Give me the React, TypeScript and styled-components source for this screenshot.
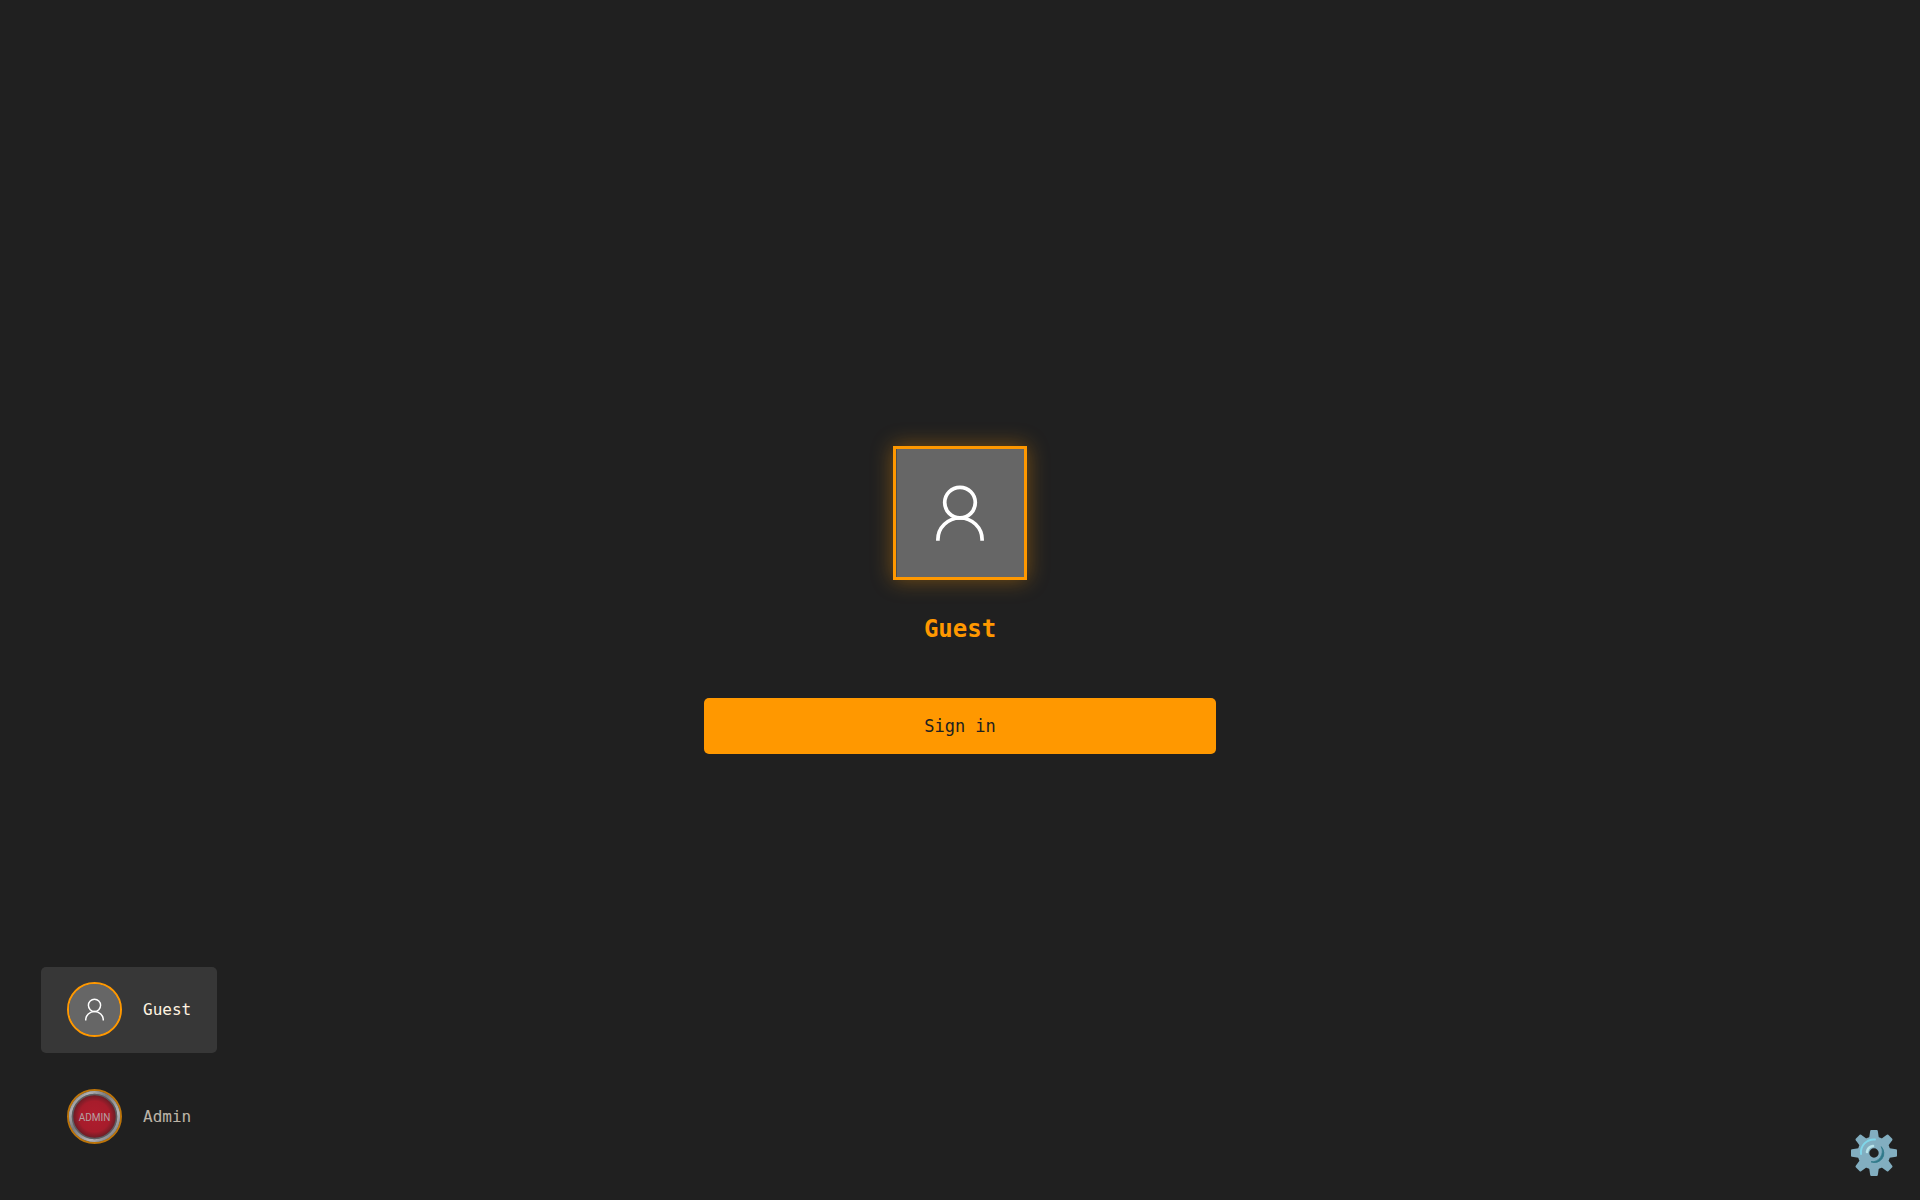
import React, { useState } from "react";
import styled, { createGlobalStyle } from "styled-components";

const mono = `"DejaVu Sans Mono", "Liberation Mono", monospace`;

const GlobalStyle = createGlobalStyle`
  * { box-sizing: border-box; }
  body { margin: 0; background: #202020; font-family: ${mono}; }
`;

const Screen = styled.main`
  min-height: 100vh;
  display: grid;
  grid-template: minmax(0, 1fr) / minmax(0, 1fr);
  background: #202020;
`;

const SignInPanel = styled.form`
  grid-area: 1 / 1;
  place-self: center;
  width: 512px;
  max-width: 90%;
  display: flex;
  flex-direction: column;
  align-items: center;
`;

const Portrait = styled.div`
  width: 134px;
  height: 134px;
  border: 3px solid #ff9800;
  background: #666;
  box-shadow: 0 0 20px rgba(255, 152, 0, 0.4);
  svg { display: block; width: 100%; height: 100%; }
`;

const UserName = styled.h1`
  margin: 32px 0 52px;
  font-size: 24px;
  line-height: 34px;
  font-weight: 700;
  color: #ff9800;
`;

const SignInButton = styled.button`
  width: 100%;
  height: 56px;
  border: 0;
  border-radius: 5px;
  background: #ff9800;
  color: #202020;
  font: 17px ${mono};
  cursor: pointer;
`;

const Footer = styled.footer`
  grid-area: 1 / 1;
  align-self: end;
  display: flex;
  justify-content: space-between;
  align-items: flex-end;
  padding: 0 20px 21px 41px;
  pointer-events: none;
  button { pointer-events: auto; }
`;

const UserList = styled.nav`
  display: flex;
  flex-direction: column;
  gap: 21px;
  padding-bottom: 19px;
`;

const UserButton = styled.button<{ $active: boolean }>`
  display: flex;
  align-items: center;
  gap: 21px;
  height: 86px;
  padding: 0 24px 1px 26px;
  border: 0;
  border-radius: 5px;
  background: ${(p) => (p.$active ? "#373737" : "transparent")};
  color: #fff3e0;
  font: 16px ${mono};
  cursor: pointer;
  > * { opacity: ${(p) => (p.$active ? 1 : 0.7)}; }
`;

const Avatar = styled.span`
  flex: none;
  width: 55px;
  height: 55px;
  border: 2px solid #ff9800;
  border-radius: 50%;
  overflow: hidden;
  background: #666;
  svg { display: block; width: 100%; height: 100%; }
`;

const Label = styled.span`
  min-width: 50px;
  text-align: left;
`;

const SettingsButton = styled.button`
  padding: 0;
  border: 0;
  background: none;
  cursor: pointer;
  svg { display: block; width: 52px; height: 52px; }
`;

const Person = () => (
  <svg viewBox="0 0 128 128" aria-hidden="true">
    <rect width="128" height="128" fill="#666" />
    <rect width="1" height="128" fill="#4c4c4c" />
    <g fill="none" stroke="#fff" strokeWidth="3.7">
      <circle cx="64" cy="53.6" r="15.3" />
      <path d="M41.9 91.7V90.5A22.1 21.5 0 0 1 86.1 90.5V91.7" />
    </g>
  </svg>
);

const AdminBadge = () => (
  <svg viewBox="0 0 51 51" aria-hidden="true">
    <defs>
      <linearGradient id="rim" x1="0" y1="0" x2="1" y2="1">
        <stop offset="0" stopColor="#8b8b90" />
        <stop offset="0.2" stopColor="#eeeef2" />
        <stop offset="0.4" stopColor="#a0a0a5" />
        <stop offset="0.7" stopColor="#f4f4f8" />
        <stop offset="1" stopColor="#85858a" />
      </linearGradient>
      <radialGradient id="red">
        <stop offset="0" stopColor="#ed1c34" />
        <stop offset="0.7" stopColor="#e01b31" />
        <stop offset="1" stopColor="#851c27" />
      </radialGradient>
    </defs>
    <rect width="51" height="51" fill="#aaa" />
    <circle cx="25.5" cy="25.5" r="24.3" fill="none" stroke="url(#rim)" strokeWidth="3" />
    <circle cx="25.5" cy="25.5" r="22" fill="url(#red)" stroke="#77777c" strokeWidth="1.5" />
    <text x="25.5" y="30" textAnchor="middle" fill="#f3d5d8" fontFamily="Roboto, 'Liberation Sans', sans-serif" fontSize="10">ADMIN</text>
  </svg>
);

const Gear = () => (
  <svg viewBox="0 0 52 52" aria-hidden="true">
    <g transform="translate(26 26)">
      <g fill="#82aec0">
        {[0, 45, 90, 135, 180, 225, 270, 315].map((a) => (
          <path key={a} transform={`rotate(${a})`} d="M-5 -14L-3.8 -22Q-3.6 -23 -2.8 -23H2.8Q3.6 -23 3.8 -22L5 -14Z" />
        ))}
        <path fillRule="evenodd" d="M0-16.5A16.5 16.5 0 1 1 0 16.5A16.5 16.5 0 1 1 0-16.5ZM0-4.7A4.7 4.7 0 1 0 0 4.7A4.7 4.7 0 1 0 0-4.7Z" />
      </g>
      <g fill="none" strokeLinecap="round">
        <path d="M-13 1A13 13 0 0 1 1-13.5" stroke="#80d6e9" strokeWidth="2" />
        <path d="M-7-1A7.2 7.2 0 0 1-1-7" stroke="#b9e4ea" strokeWidth="2.6" />
        <path d="M7.5-6A9.3 9.3 0 0 1-3 8.8A10.5 10.5 0 0 0 7.5-6Z" fill="#2f7889" stroke="#2f7889" strokeWidth="0.8" />
      </g>
    </g>
  </svg>
);

const users = [
  { name: "Guest", Picture: Person },
  { name: "Admin", Picture: AdminBadge },
];

export default function App() {
  const [selected, setSelected] = useState(0);
  const { name, Picture } = users[selected];
  return (
    <>
      <GlobalStyle />
      <Screen>
        <SignInPanel onSubmit={(e) => e.preventDefault()}>
          <Portrait><Picture /></Portrait>
          <UserName>{name}</UserName>
          <SignInButton type="submit">Sign in</SignInButton>
        </SignInPanel>
        <Footer>
          <UserList aria-label="Users">
            {users.map((user, i) => (
              <UserButton key={user.name} type="button" $active={i === selected} onClick={() => setSelected(i)}>
                <Avatar><user.Picture /></Avatar>
                <Label>{user.name}</Label>
              </UserButton>
            ))}
          </UserList>
          <SettingsButton type="button" aria-label="Settings"><Gear /></SettingsButton>
        </Footer>
      </Screen>
    </>
  );
}
